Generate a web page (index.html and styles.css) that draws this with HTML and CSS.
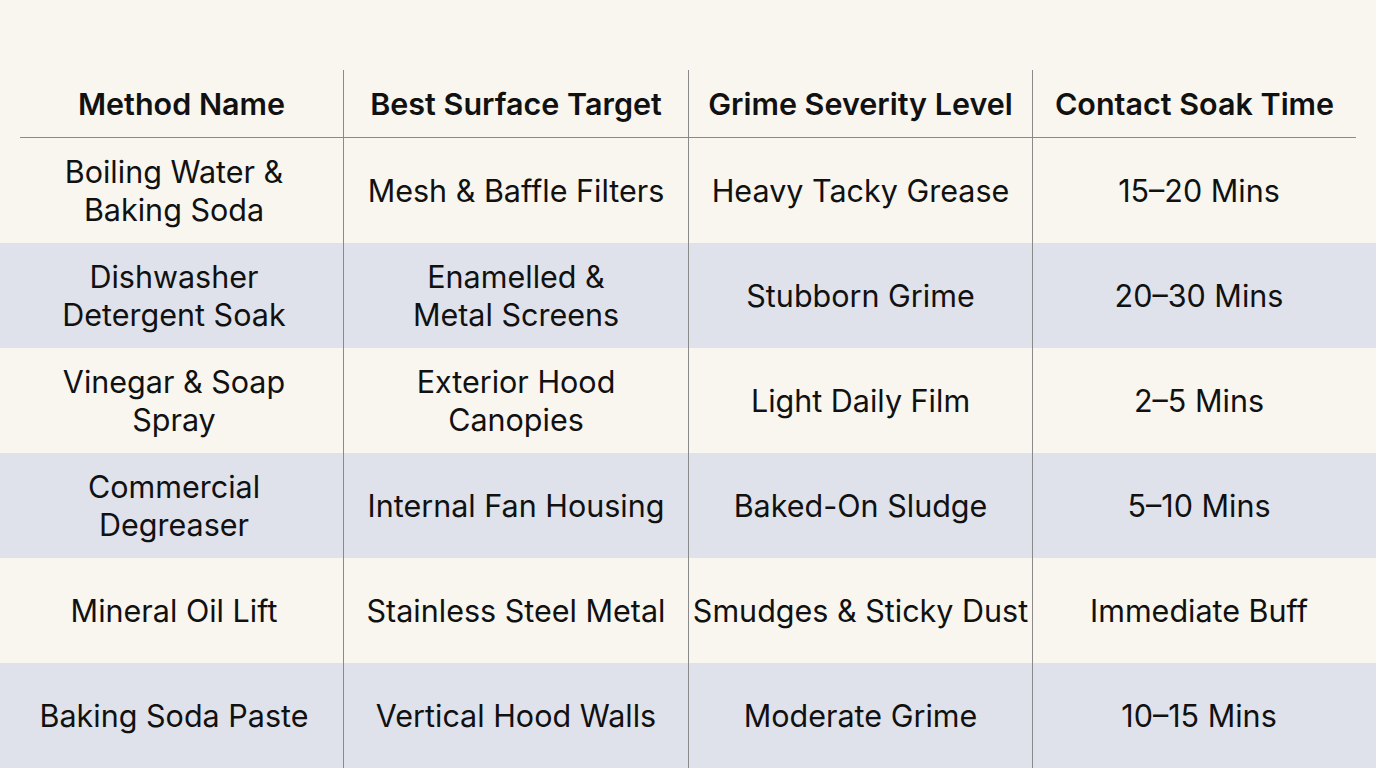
FILE: index.html
```html
<!DOCTYPE html>
<html>
<head>
<meta charset="utf-8">
<link rel="stylesheet" href="styles.css">
</head>
<body>
<div class="page">
  <div class="row head">
    <div class="grid">
      <div class="cell">Method Name</div>
      <div class="cell">Best Surface Target</div>
      <div class="cell">Grime Severity Level</div>
      <div class="cell">Contact Soak Time</div>
    </div>
  </div>
  <div class="row">
    <div class="grid">
      <div class="cell">Boiling Water &amp;<br>Baking Soda</div>
      <div class="cell">Mesh &amp; Baffle Filters</div>
      <div class="cell">Heavy Tacky Grease</div>
      <div class="cell">15–20 Mins</div>
    </div>
  </div>
  <div class="row alt">
    <div class="grid">
      <div class="cell">Dishwasher<br>Detergent Soak</div>
      <div class="cell">Enamelled &amp;<br>Metal Screens</div>
      <div class="cell">Stubborn Grime</div>
      <div class="cell">20–30 Mins</div>
    </div>
  </div>
  <div class="row">
    <div class="grid">
      <div class="cell">Vinegar &amp; Soap<br>Spray</div>
      <div class="cell">Exterior Hood<br>Canopies</div>
      <div class="cell">Light Daily Film</div>
      <div class="cell">2–5 Mins</div>
    </div>
  </div>
  <div class="row alt">
    <div class="grid">
      <div class="cell">Commercial<br>Degreaser</div>
      <div class="cell">Internal Fan Housing</div>
      <div class="cell">Baked-On Sludge</div>
      <div class="cell">5–10 Mins</div>
    </div>
  </div>
  <div class="row">
    <div class="grid">
      <div class="cell">Mineral Oil Lift</div>
      <div class="cell">Stainless Steel Metal</div>
      <div class="cell">Smudges &amp; Sticky Dust</div>
      <div class="cell">Immediate Buff</div>
    </div>
  </div>
  <div class="row alt">
    <div class="grid">
      <div class="cell">Baking Soda Paste</div>
      <div class="cell">Vertical Hood Walls</div>
      <div class="cell">Moderate Grime</div>
      <div class="cell">10–15 Mins</div>
    </div>
  </div>
</div>
</body>
</html>
```
FILE: styles.css
```css
html, body {
  margin: 0;
  padding: 0;
  background: #f8f6ef;
  height: 768px;
  overflow: hidden;
}
.page {
  padding-top: 70px;
  font-family: Inter, "Noto Sans", sans-serif;
  color: #111;
  font-size: 30.5px;
  line-height: 38px;
  letter-spacing: 0;
}
.row {
  padding: 0 20px;
  height: 105px;
}
.row.alt {
  background: #dfe2ea;
}
.row.head {
  height: 68px;
}
.grid {
  display: grid;
  grid-template-columns: 323px 345px 344px 324px;
  height: 100%;
}
.head .grid {
  border-bottom: 1px solid #8a8a8a;
  box-sizing: border-box;
}
.head .cell {
  font-weight: 600;
}
.cell {
  display: flex;
  align-items: center;
  justify-content: center;
  text-align: center;
  box-sizing: border-box;
}
.cell + .cell {
  border-left: 1px solid #8a8a8a;
}
.row:not(.head) .cell:nth-child(1) {
  padding-right: 15px;
}
.row:not(.head) .cell:nth-child(4) {
  padding-left: 9px;
}
```
